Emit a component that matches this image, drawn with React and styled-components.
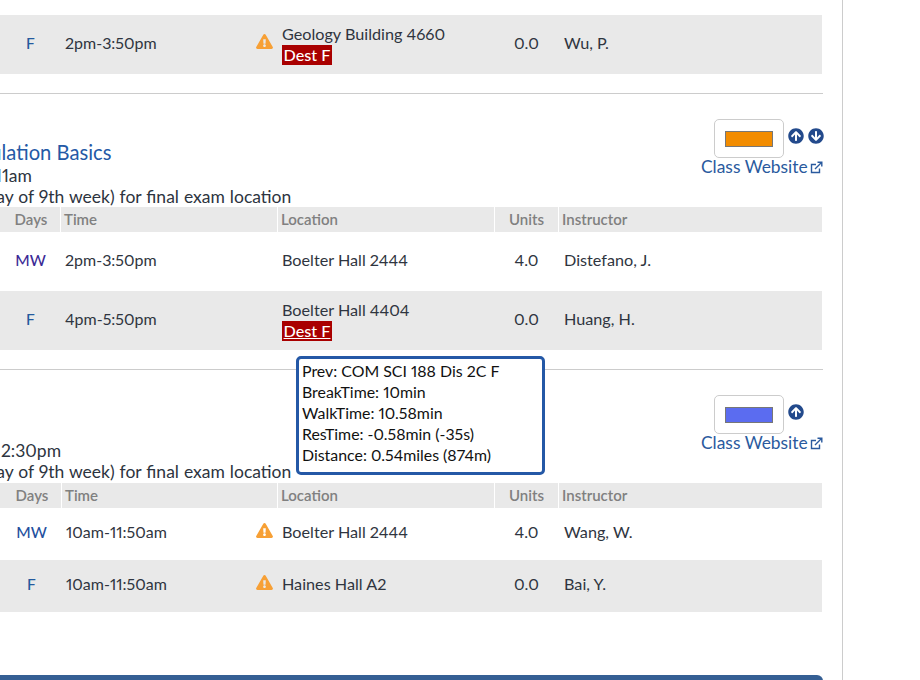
import React from "react";
import styled, { createGlobalStyle } from "styled-components";
import { FaExclamationTriangle, FaArrowCircleUp, FaArrowCircleDown } from "react-icons/fa";

const Global = createGlobalStyle`
  html, body { margin: 0; padding: 0; background: #fff; }
  body {
    font-family: "Lato", "Liberation Sans", sans-serif;
    font-variant-numeric: proportional-nums;
    color: #333;
    overflow: hidden;
  }
`;

const Viewport = styled.div`
  position: relative;
  width: 920px;
  height: 680px;
  overflow: hidden;
`;

const Main = styled.main`
  width: 843px;
  height: 680px;
  border-right: 1px solid #ccc;
  padding-top: 15px;
  box-sizing: border-box;
`;

const Divider = styled.hr`
  width: 823px;
  height: 1px;
  margin: ${p => p.$top}px 0 0;
  border: 0;
  background: #ccc;
`;

const Section = styled.section`
  width: 823px;
  height: ${p => p.$height}px;
  display: flex;
  justify-content: space-between;
  align-items: flex-start;
`;

const Info = styled.div`
  padding-top: ${p => p.$top}px;
  font-size: 17.5px;
  word-spacing: 0.5px;
  line-height: 21px;
  color: #2d3440;
`;

const Title = styled.div`
  margin-left: -${p => p.$bleed}px;
  margin-top: -1px;
  margin-bottom: 1px;
  font-size: 20.2px;
  word-spacing: 0;
  line-height: 23px;
  color: #2459a6;
  white-space: nowrap;
`;

const Line = styled.div`
  margin-left: -${p => p.$bleed}px;
  white-space: nowrap;
`;

const Controls = styled.div`
  padding-top: ${p => p.$top}px;
  width: 122px;
  display: flex;
  flex-direction: column;
  align-items: flex-start;
`;

const PickerRow = styled.div`
  margin-left: 13px;
  display: flex;
  align-items: flex-start;
  gap: 4px;
  color: #234a8c;
`;

const Picker = styled.div`
  width: 70px;
  height: 39px;
  box-sizing: border-box;
  border: 1px solid #ccc;
  border-radius: 5px;
  display: flex;
  align-items: center;
  justify-content: center;
`;

const Swatch = styled.div`
  width: 48px;
  height: 16px;
  box-sizing: border-box;
  border: 1px solid #777;
  background: ${p => p.$color};
`;

const Arrows = styled.div`
  margin-top: 9px;
  display: flex;
  gap: 4px;
`;

const Site = styled.a`
  margin-top: -1px;
  display: flex;
  align-items: center;
  gap: 2px;
  font-size: 17.4px;
  line-height: 20px;
  color: #2a5a9e;
  white-space: nowrap;
`;

const Table = styled.div`
  width: 822px;
`;

const Grid = styled.div`
  display: grid;
  grid-template-columns: ${p => p.$lead}px 58px ${p => 216 - p.$lead + 1}px 216px 63px 263px;
  column-gap: 1px;
  height: ${p => p.$height}px;
  box-sizing: border-box;
`;

const HeadCell = styled.div`
  background: #e9e9e9;
  font-size: 15px;
  font-weight: 600;
  color: #808080;
  line-height: 25px;
  padding-left: ${p => (p.$center ? 0 : 3)}px;
  text-align: ${p => (p.$center ? "center" : "left")};
`;

const BodyRow = styled(Grid)`
  background: ${p => (p.$shaded ? "#e9e9e9" : "#fff")};
  font-size: 16.2px;
  line-height: 20px;
  color: #2f3540;
  align-items: center;
  padding-bottom: ${p => p.$lift}px;
`;

const Days = styled.div`
  text-align: center;
  font-weight: 500;
  font-size: 15.5px;
  color: ${p => p.$color};
  margin-left: -1px;
`;

const Time = styled.div`
  padding: 0 4px;
  font-size: 16px;
  display: flex;
  align-items: center;
  justify-content: space-between;
`;

const Warn = styled(FaExclamationTriangle)`
  width: 17px;
  height: 15px;
  color: #f7a035;
  margin-top: -3px;
`;

const Loc = styled.div`
  padding-left: 4px;
  padding-top: ${p => (p.$stacked ? 2 : 0)}px;
`;

const Units = styled.div`
  text-align: center;
`;

const Instructor = styled.div`
  padding-left: 5px;
`;

const Dest = styled.span`
  display: block;
  width: 50px;
  height: 20px;
  margin-top: 1px;
  background: #a90000;
  color: #fff;
  font-weight: 500;
  line-height: 20px;
  text-align: center;
  text-decoration: ${p => (p.$hover ? "underline" : "none")};
`;

const Tooltip = styled.div`
  position: absolute;
  left: 296px;
  top: 356px;
  width: 249px;
  height: 119px;
  box-sizing: border-box;
  border: 3px solid #2458a6;
  border-radius: 5px;
  background: #fff;
  padding: 1px 0 0 3px;
  font-size: 15.9px;
  line-height: 21px;
  color: #111;
  white-space: nowrap;
`;

const BottomBar = styled.div`
  position: absolute;
  left: -20px;
  top: 675px;
  width: 843px;
  height: 20px;
  border-radius: 6px;
  background: #355f94;
`;

const LinkIcon = () => (
  <svg width="13" height="13" viewBox="0 0 13 13" fill="none" stroke="currentColor" strokeWidth="1.4">
    <path d="M9.5 7.5V11.5H1.5V3.5H6" />
    <path d="M5 8L11.5 1.5M7.5 1.2H11.8V5.5" />
  </svg>
);

const Head = ({ lead }) => (
  <Grid $lead={lead} $height={25}>
    <HeadCell />
    <HeadCell $center>Days</HeadCell>
    <HeadCell>Time</HeadCell>
    <HeadCell>Location</HeadCell>
    <HeadCell $center>Units</HeadCell>
    <HeadCell>Instructor</HeadCell>
  </Grid>
);

const Row = ({ lead, height, lift, shaded, days, dayColor, time, warn, loc, dest, units, who }) => (
  <BodyRow $lead={lead} $height={height} $shaded={shaded} $lift={lift}>
    <div />
    <Days $color={dayColor}>{days}</Days>
    <Time>
      {time}
      {warn && <Warn />}
    </Time>
    <Loc $stacked={!!dest}>
      {loc}
      {dest && <Dest $hover={dest === "hover"}>Dest F</Dest>}
    </Loc>
    <Units>{units}</Units>
    <Instructor>{who}</Instructor>
  </BodyRow>
);

const Side = ({ color, down, top }) => (
  <Controls $top={top}>
    <PickerRow>
      <Picker><Swatch $color={color} /></Picker>
      <Arrows>
        <FaArrowCircleUp size={16} />
        {down && <FaArrowCircleDown size={16} />}
      </Arrows>
    </PickerRow>
    <Site>Class Website<LinkIcon /></Site>
  </Controls>
);

export default function App() {
  return (
    <Viewport>
      <Global />
      <Main>
        <Table>
          <Row lead={1} height={59} lift={3} shaded days="F" dayColor="#245a9e" time="2pm-3:50pm" warn loc="Geology Building 4660" dest="plain" units="0.0" who="Wu, P." />
        </Table>
        <Divider $top={19} />
        <Section $height={113}>
          <Info $top={48}>
            <Title $bleed={42}>Simulation Basics</Title>
            <Line $bleed={5}>11am</Line>
            <Line $bleed={97}>Check (1st day of 9th week) for final exam location</Line>
          </Info>
          <Side color="#f28c00" down top={25} />
        </Section>
        <Table>
          <Head lead={1} />
          <Row lead={1} height={59} lift={3} days="MW" dayColor="#3b2a96" time="2pm-3:50pm" loc="Boelter Hall 2444" units="4.0" who="Distefano, J." />
          <Row lead={1} height={59} lift={3} shaded days="F" dayColor="#245a9e" time="4pm-5:50pm" loc="Boelter Hall 4404" dest="hover" units="0.0" who="Huang, H." />
        </Table>
        <Divider $top={19} />
        <Section $height={113}>
          <Info $top={70}>
            <Line $bleed={6}>12:30pm</Line>
            <Line $bleed={97}>Check (1st day of 9th week) for final exam location</Line>
          </Info>
          <Side color="#5b6cf0" top={25} />
        </Section>
        <Table>
          <Head lead={2} />
          <Row lead={2} height={52} lift={4} days="MW" dayColor="#234f9e" time="10am-11:50am" warn loc="Boelter Hall 2444" units="4.0" who="Wang, W." />
          <Row lead={2} height={52} lift={4} shaded days="F" dayColor="#245a9e" time="10am-11:50am" warn loc="Haines Hall A2" units="0.0" who="Bai, Y." />
        </Table>
      </Main>
      <Tooltip>
        <div>Prev: COM SCI 188 Dis 2C F</div>
        <div>BreakTime: 10min</div>
        <div>WalkTime: 10.58min</div>
        <div>ResTime: -0.58min (-35s)</div>
        <div>Distance: 0.54miles (874m)</div>
      </Tooltip>
      <BottomBar />
    </Viewport>
  );
}
